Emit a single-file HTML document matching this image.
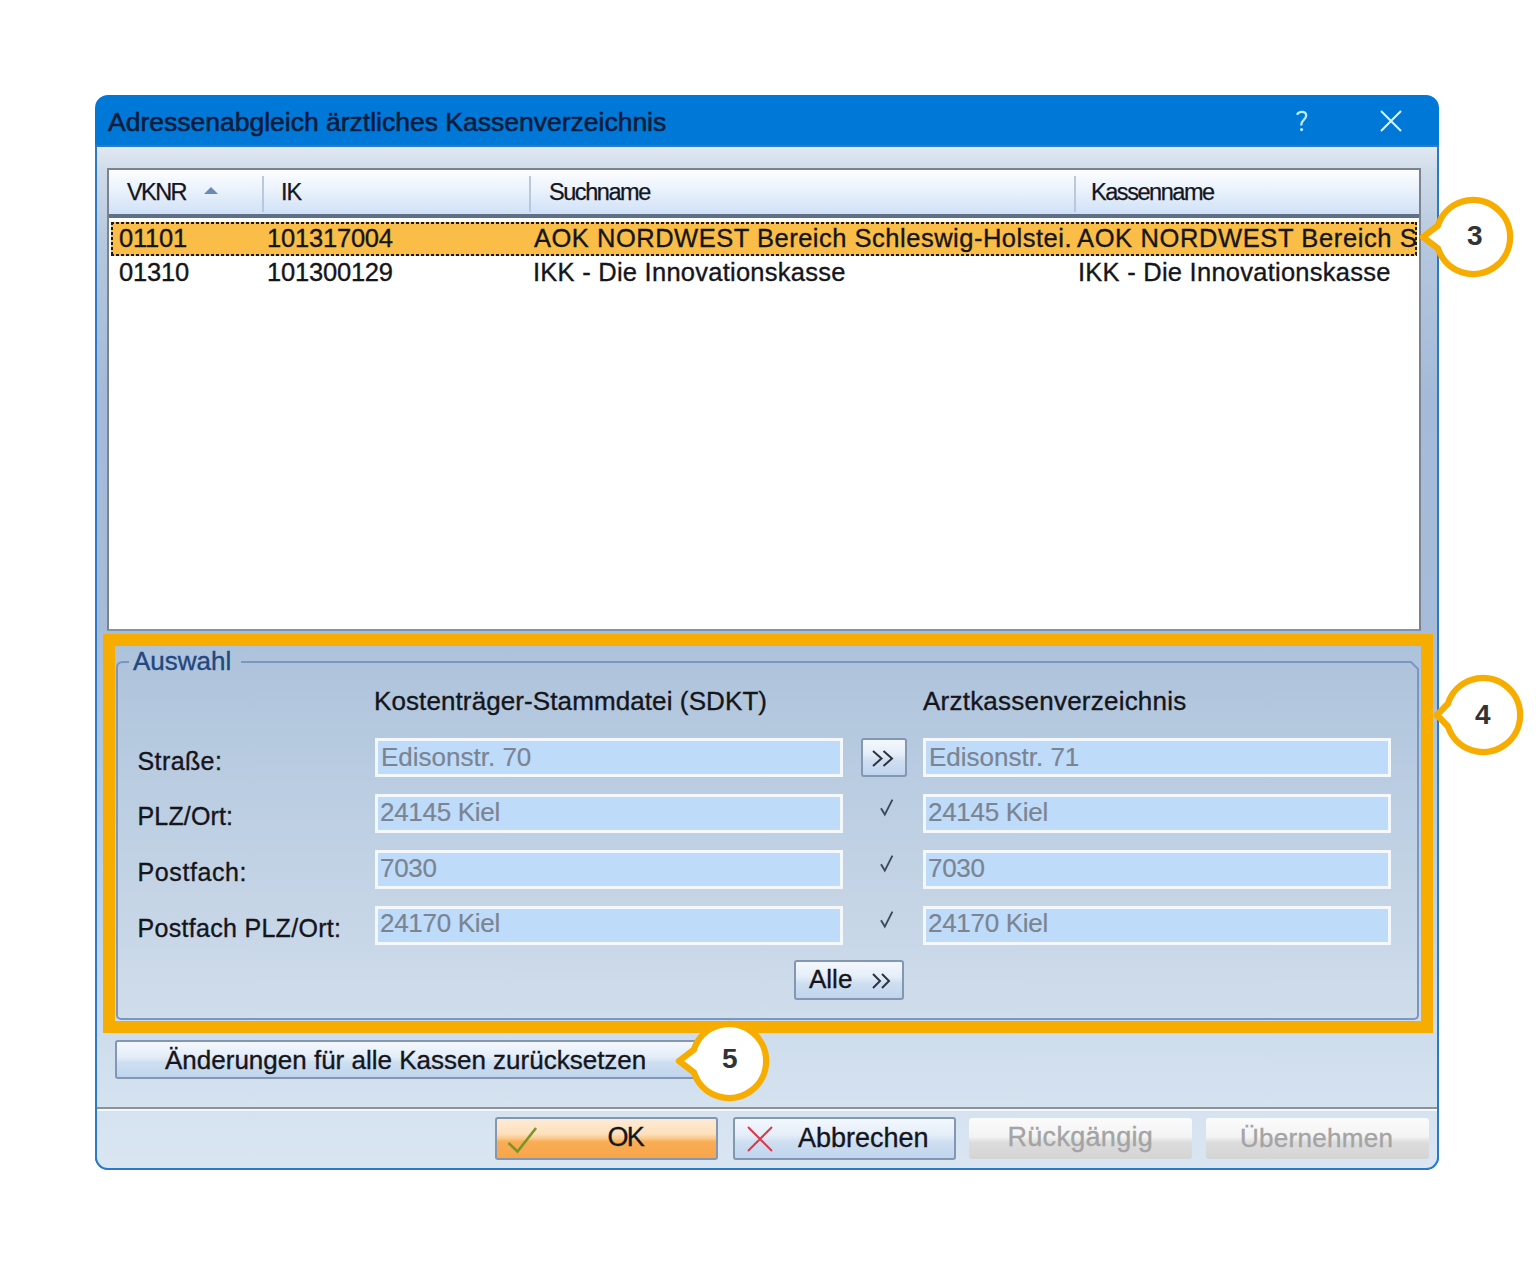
<!DOCTYPE html>
<html><head><meta charset="utf-8">
<style>
*{box-sizing:border-box;margin:0;padding:0}
html,body{width:1536px;height:1268px;overflow:hidden;background:#fff;font-family:"Liberation Sans",sans-serif}
.a{position:absolute}
.t{position:absolute;white-space:pre;line-height:1;color:#15151c;-webkit-text-stroke:0.35px currentColor}
#dlg{left:95px;top:95px;width:1344px;height:1075px;border-radius:13px;background:#0078d7;overflow:hidden}
#body{left:2px;top:52px;width:1340px;height:1021px;background:linear-gradient(#e1e9f2 0px,#cfdbe9 25px,#b4c7de 100px,#a4bad8 250px,#a6bcd9 480px,#b9cce2 700px,#cddcec 880px,#d5e2f0 960px,#dae6f2 1021px);border-radius:0 0 11px 11px}
#lv{left:107px;top:168px;width:1314px;height:463px;background:#fff;border:2px solid #7b838f;border-bottom-color:#7f93ad}
#hdr{left:0;top:0;width:1310px;height:48px;background:linear-gradient(#fdfeff,#eaf2fc 45%,#d0e1f7);border-bottom:4px solid #5f6f84}
.sep{position:absolute;top:6px;width:2px;height:36px;background:#b9c8da}
#sel{left:111px;top:222px;width:1306px;height:34px;background:repeating-linear-gradient(90deg,#1c1a18 0 3px,transparent 3px 5px) top/100% 2px no-repeat,repeating-linear-gradient(90deg,#1c1a18 0 3px,transparent 3px 5px) bottom/100% 2px no-repeat,repeating-linear-gradient(#1c1a18 0 3px,transparent 3px 5px) left/2px 100% no-repeat,repeating-linear-gradient(#1c1a18 0 3px,transparent 3px 5px) right/2px 100% no-repeat,#f9bd48}
#orb{left:103px;top:634px;width:1330px;height:399px;border:12px solid #f7ad00;background:linear-gradient(#adc3db,#d0ddeb) padding-box}
#grp{left:116px;top:675px;width:1303px;height:345px;border:2px solid #7a97c4;border-top:0;border-radius:0 0 5px 5px}
.fld{position:absolute;height:39px;border:3px solid #f4f8fd;background:#bfdbfa}
.ft{position:absolute;white-space:pre;line-height:1;color:#7b8490;font-size:27px;-webkit-text-stroke:0.2px currentColor}
.btn{position:absolute;border:2px solid #8396b2;border-radius:3px;background:linear-gradient(#f4f8fd,#e4edf8 42%,#cfdff1 58%,#bfd4ed)}
.callout{position:absolute}
</style></head><body>
<div id="dlg" class="a">
  <div class="t" style="left:13px;top:13.5px;font-size:26.5px;color:#0a1c3c;-webkit-text-stroke:0.6px #0a1c3c">Adressenabgleich ärztliches Kassenverzeichnis</div>
  <div class="a" style="left:0;top:50px;width:1344px;height:1025px;background:#2b79c9;border-radius:0 0 13px 13px"></div>
  <div id="body" class="a"></div>
</div>
<!-- title icons -->
<svg class="a" style="left:1290px;top:105px" width="24" height="32" viewBox="0 0 24 32"><path d="M7 9.8 Q8.2 6.8 12 6.8 Q16.2 6.8 16.2 10.6 Q16.2 13 13.6 15.2 Q11.2 17.2 11.2 20.6" fill="none" stroke="#b4eeff" stroke-width="2.3"/><circle cx="11.6" cy="24.6" r="1.6" fill="#b4eeff"/></svg>
<svg class="a" style="left:1378px;top:108px" width="26" height="26" viewBox="0 0 26 26"><path d="M3 3 L23 23 M23 3 L3 23" stroke="#d4f4ff" stroke-width="2.1"/></svg>

<div id="lv" class="a">
  <div id="hdr" class="a">
    <div class="sep" style="left:153px"></div>
    <div class="sep" style="left:420px"></div>
    <div class="sep" style="left:965px"></div>
  </div>
</div>
<div class="t" style="left:127px;top:180.5px;font-size:23.5px;letter-spacing:-1.6px;-webkit-text-stroke:0.25px">VKNR</div>
<svg class="a" style="left:203.5px;top:187px" width="14" height="7"><path d="M0 7 L7 0 L14 7Z" fill="#6a8ab2"/></svg>
<div class="t" style="left:281px;top:180.5px;font-size:23.5px;letter-spacing:-1px;-webkit-text-stroke:0.25px">IK</div>
<div class="t" style="left:549px;top:180.5px;font-size:23.5px;letter-spacing:-1.45px;-webkit-text-stroke:0.25px">Suchname</div>
<div class="t" style="left:1091px;top:180.5px;font-size:23.5px;letter-spacing:-1.45px;-webkit-text-stroke:0.25px">Kassenname</div>

<div id="sel" class="a"></div>
<div class="t" style="left:119px;top:226px;font-size:25.5px;letter-spacing:-0.2px">01101</div>
<div class="t" style="left:267px;top:226px;font-size:25.5px;letter-spacing:-0.2px">101317004</div>
<div class="t" style="left:534px;top:226px;font-size:25.5px;letter-spacing:0.51px">AOK NORDWEST Bereich Schleswig-Holstei.</div>
<div class="t" style="left:1077px;top:226px;font-size:25.5px;letter-spacing:0.62px">AOK NORDWEST Bereich S</div>
<div class="t" style="left:119px;top:259.5px;font-size:25.5px;letter-spacing:-0.2px">01310</div>
<div class="t" style="left:267px;top:259.5px;font-size:25.5px;letter-spacing:-0.2px">101300129</div>
<div class="t" style="left:533px;top:259.5px;font-size:25.5px;letter-spacing:0.25px">IKK - Die Innovationskasse</div>
<div class="t" style="left:1078px;top:259.5px;font-size:25.5px;letter-spacing:0.25px">IKK - Die Innovationskasse</div>

<div id="orb" class="a"></div>
<div id="grp" class="a"></div>

<!-- group top line segments -->
<svg class="a" style="left:110px;top:655px" width="1320" height="30"><path d="M7 24 L7 13 Q7 7 13 7 L19 7 M131 7 L1301 7 L1308 14 L1308 24" fill="none" stroke="#7a97c4" stroke-width="2"/></svg>
<div class="t" style="left:133px;top:648px;font-size:26px;color:#23477f">Auswahl</div>
<div class="t" style="left:374px;top:688px;font-size:26px;letter-spacing:0.1px">Kostenträger-Stammdatei (SDKT)</div>
<div class="t" style="left:923px;top:688px;font-size:26px;letter-spacing:0.23px">Arztkassenverzeichnis</div>
<div class="t" style="left:137.5px;top:748.5px;font-size:25px;letter-spacing:0.4px">Straße:</div>
<div class="t" style="left:137.5px;top:804px;font-size:25px;letter-spacing:0.15px">PLZ/Ort:</div>
<div class="t" style="left:137.5px;top:860px;font-size:25px;letter-spacing:0.6px">Postfach:</div>
<div class="t" style="left:137.5px;top:916px;font-size:25px;letter-spacing:0.3px">Postfach PLZ/Ort:</div>

<div class="fld" style="left:375px;top:738px;width:468px"></div>
<div class="fld" style="left:375px;top:794px;width:468px"></div>
<div class="fld" style="left:375px;top:850px;width:468px"></div>
<div class="fld" style="left:375px;top:906px;width:468px"></div>
<div class="fld" style="left:923px;top:738px;width:468px"></div>
<div class="fld" style="left:923px;top:794px;width:468px"></div>
<div class="fld" style="left:923px;top:850px;width:468px"></div>
<div class="fld" style="left:923px;top:906px;width:468px"></div>
<div class="ft" style="left:381px;top:744px;font-size:26px">Edisonstr. 70</div>
<div class="ft" style="left:380px;top:799px;font-size:26px;letter-spacing:-0.3px">24145 Kiel</div>
<div class="ft" style="left:380px;top:855px;font-size:26px;letter-spacing:-0.3px">7030</div>
<div class="ft" style="left:380px;top:910px;font-size:26px;letter-spacing:-0.3px">24170 Kiel</div>
<div class="ft" style="left:929px;top:744px;font-size:26px">Edisonstr. 71</div>
<div class="ft" style="left:928px;top:799px;font-size:26px;letter-spacing:-0.3px">24145 Kiel</div>
<div class="ft" style="left:928px;top:855px;font-size:26px;letter-spacing:-0.3px">7030</div>
<div class="ft" style="left:928px;top:910px;font-size:26px;letter-spacing:-0.3px">24170 Kiel</div>

<div class="btn" style="left:861px;top:738px;width:46px;height:39px"></div>
<svg class="a" style="left:868px;top:746px" width="32" height="24"><path d="M5 5 L13.5 12.5 L5 20 M15.5 5 L24 12.5 L15.5 20" fill="none" stroke="#2b3340" stroke-width="2"/></svg>
<svg class="a" style="left:876px;top:795px" width="22" height="26"><path d="M5 13.3 L8.8 19.6 L16.4 4.6" fill="none" stroke="#3e4a5a" stroke-width="1.9"/></svg>
<svg class="a" style="left:876px;top:851px" width="22" height="26"><path d="M5 13.3 L8.8 19.6 L16.4 4.6" fill="none" stroke="#3e4a5a" stroke-width="1.9"/></svg>
<svg class="a" style="left:876px;top:907px" width="22" height="26"><path d="M5 13.3 L8.8 19.6 L16.4 4.6" fill="none" stroke="#3e4a5a" stroke-width="1.9"/></svg>

<div class="btn" style="left:794px;top:960px;width:110px;height:40px"></div>
<div class="t" style="left:809px;top:966px;font-size:26px">Alle</div>
<svg class="a" style="left:868px;top:970px" width="30" height="24"><path d="M5 4 L12 11 L5 18 M14 4 L21 11 L14 18" fill="none" stroke="#2b3340" stroke-width="2"/></svg>

<div class="btn" style="left:115px;top:1040px;width:590px;height:39px"></div>
<div class="t" style="left:165px;top:1047px;font-size:26px">Änderungen für alle Kassen zurücksetzen</div>

<div class="a" style="left:97px;top:1107px;width:1340px;height:2px;background:#8e9297"></div>
<div class="a" style="left:97px;top:1109px;width:1340px;height:2px;background:#f4f8fc"></div>

<div class="btn" style="left:495px;top:1117px;width:223px;height:43px;background:linear-gradient(#fdebd6,#fde0bc 38%,#fbc98a 50%,#f9ad55 58%,#f8a548)"></div>
<svg class="a" style="left:504px;top:1124px" width="36" height="32"><path d="M4.5 19 L13.5 27.5 L32 4" fill="none" stroke="#7a9526" stroke-width="2.6"/></svg>
<div class="t" style="left:607.5px;top:1123.5px;font-size:27px;letter-spacing:-1.7px">OK</div>
<div class="btn" style="left:733px;top:1117px;width:223px;height:43px"></div>
<svg class="a" style="left:744px;top:1124px" width="32" height="32"><path d="M4 3 L28 27 M28 3 L4 27" fill="none" stroke="#d83a4c" stroke-width="2"/></svg>
<div class="t" style="left:798px;top:1125px;font-size:27px">Abbrechen</div>
<div class="a" style="left:969px;top:1118px;width:223px;height:41px;border-radius:3px;background:linear-gradient(#fbfbfb,#f4f4f4 45%,#dcdcdc 60%,#d4d4d4)"></div>
<div class="t" style="left:1007.5px;top:1124px;font-size:27px;letter-spacing:0.3px;color:#a4a4a4">Rückgängig</div>
<div class="a" style="left:1206px;top:1118px;width:223px;height:41px;border-radius:3px;background:linear-gradient(#fbfbfb,#f4f4f4 45%,#dcdcdc 60%,#d4d4d4)"></div>
<div class="t" style="left:1240px;top:1124.5px;font-size:26px;letter-spacing:0.3px;color:#a4a4a4">Übernehmen</div>

<!-- callouts -->
<svg class="a" style="left:1413px;top:191px" width="110" height="92" viewBox="-60 -46 110 92"><path d="M-50 0 L-35 -11.5 A37 37 0 1 1 -35 11.5 Z" fill="#fff" stroke="#f7ad00" stroke-width="6.3" stroke-linejoin="round"/></svg>
<div class="t" style="left:1467px;top:222px;font-size:28px;font-weight:bold;color:#333;-webkit-text-stroke:0">3</div>
<svg class="a" style="left:1423px;top:669px" width="110" height="92" viewBox="-60 -46 110 92"><path d="M-46 0 L-35 -11.5 A37 37 0 1 1 -35 11.5 Z" fill="#fff" stroke="#f7ad00" stroke-width="6.3" stroke-linejoin="round"/></svg>
<div class="t" style="left:1475px;top:701px;font-size:28px;font-weight:bold;color:#333;-webkit-text-stroke:0">4</div>
<svg class="a" style="left:669px;top:1015px" width="110" height="92" viewBox="-60 -46 110 92"><path d="M-50 0 L-35 -11.5 A37 37 0 1 1 -35 11.5 Z" fill="#fff" stroke="#f7ad00" stroke-width="6.3" stroke-linejoin="round"/></svg>
<div class="t" style="left:722px;top:1045px;font-size:28px;font-weight:bold;color:#333;-webkit-text-stroke:0">5</div>
</body></html>
